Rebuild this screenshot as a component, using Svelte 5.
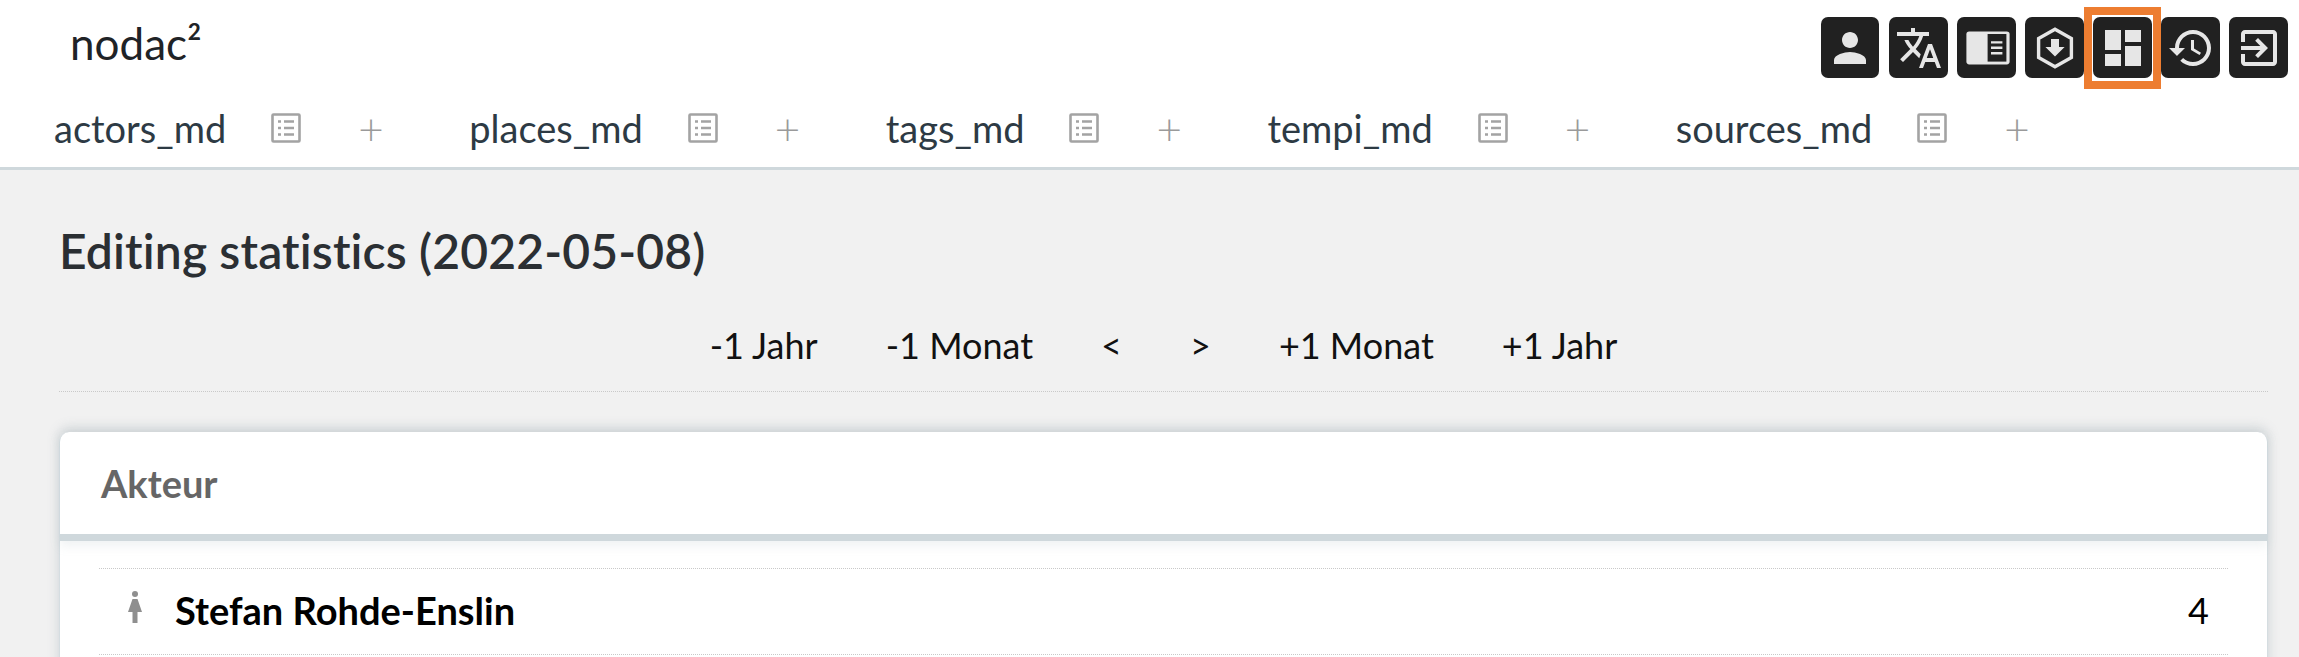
<script lang="ts">
  const tabs = ["actors_md", "places_md", "tags_md", "tempi_md", "sources_md"];
  const dateLinks = ["-1 Jahr", "-1 Monat", "<", ">", "+1 Monat", "+1 Jahr"];
</script>

<div class="page">
  <header class="topbar">
    <div class="topbar__row">
      <div class="brand">nodac²</div>
      <div class="tools">
        <button class="tool tool--narrow" type="button" aria-label="Profil">
          <svg viewBox="0 0 24 24"><path d="M12 12c2.21 0 4-1.79 4-4s-1.79-4-4-4-4 1.79-4 4 1.79 4 4 4zm0 2c-2.67 0-8 1.34-8 4v2h16v-2c0-2.66-5.33-4-8-4z" /></svg>
        </button>
        <button class="tool" type="button" aria-label="Sprache">
          <svg viewBox="0 0 24 24"><path d="M12.87 15.07l-2.54-2.51.03-.03c1.74-1.94 2.98-4.17 3.71-6.53H17V4h-7V2H8v2H1v1.99h11.17C11.5 7.92 10.44 9.75 9 11.35 8.07 10.32 7.3 9.19 6.69 8h-2c.73 1.63 1.73 3.17 2.98 4.56l-5.09 5.02L4 19l5-5 3.11 3.11.76-2.04zM18.5 10h-2L12 22h2l1.12-3h4.75L21 22h2l-4.5-12zm-2.62 7l1.62-4.33L19.12 17h-3.24z" /></svg>
        </button>
        <button class="tool" type="button" aria-label="Ansicht">
          <svg viewBox="0 0 24 24">
            <rect x="1.700" y="3.800" width="21.600" height="16.400" rx="1.400" />
            <rect class="tool__cut" x="12.300" y="5" width="9.400" height="13.800" />
            <path d="M14 8.600h5.700v1.200H14zM14 11.300h5.700v1.200H14zM14 14h5.700v1.200H14z" />
          </svg>
        </button>
        <button class="tool" type="button" aria-label="Import">
          <svg viewBox="0 0 24 24">
            <path class="tool__line" d="M12 2.600l8.200 4.700v9.400L12 21.400l-8.200-4.700V7.300z" />
            <path d="M10 7.500h4v4h2.800L12 16.300 7.200 11.500H10z" />
          </svg>
        </button>
        <span class="tool-frame">
          <button class="tool" type="button" aria-label="Dashboard">
            <svg viewBox="0 0 24 24"><path d="M3 13h8V3H3v10zm0 8h8v-6H3v6zm10 0h8V11h-8v10zm0-18v6h8V3h-8z" /></svg>
          </button>
        </span>
        <button class="tool" type="button" aria-label="Verlauf">
          <svg viewBox="0 0 24 24"><path d="M13 3c-4.970 0-9 4.030-9 9H1l3.890 3.890.070.140L9 12H6c0-3.870 3.130-7 7-7s7 3.130 7 7-3.130 7-7 7c-1.930 0-3.680-.790-4.940-2.060l-1.420 1.420C8.270 19.990 10.510 21 13 21c4.970 0 9-4.030 9-9s-4.030-9-9-9zm-1 5v5l4.280 2.540.720-1.210-3.500-2.080V8H12z" /></svg>
        </button>
        <button class="tool" type="button" aria-label="Abmelden">
          <svg viewBox="0 0 24 24"><path d="M10.090 15.590L11.500 17l5-5-5-5-1.410 1.410L12.670 11H3v2h9.670l-2.580 2.590zM19 3H5c-1.110 0-2 .9-2 2v4h2V5h14v14H5v-4H3v4c0 1.100.89 2 2 2h14c1.100 0 2-.9 2-2V5c0-1.100-.9-2-2-2z" /></svg>
        </button>
      </div>
    </div>

    <nav class="tabs">
      {#each tabs as tab}
        <div class="tab">
          <span class="tab__name">{tab}</span>
          <svg class="tab__list" viewBox="0 0 30 30">
            <rect x="1.500" y="1.500" width="27" height="27" rx="1" />
            <path d="M7 8.500h3M13 8.500h10M7 15h3M13 15h10M7 21.500h3M13 21.500h10" />
          </svg>
          <span class="tab__plus">+</span>
        </div>
      {/each}
    </nav>
  </header>

  <main class="content">
    <h1 class="title">Editing statistics (2022-05-08)</h1>

    <div class="dates">
      {#each dateLinks as link}
        <span>{link}</span>
      {/each}
    </div>

    <section class="card">
      <h2 class="card__header">Akteur</h2>
      <div class="card__body">
        <div class="row">
          <svg class="row__icon" viewBox="0 0 14 32">
            <circle cx="7" cy="3" r="3" />
            <path d="M4.500 8h5L14 21H9.500v11h-5V21H0z" />
          </svg>
          <span class="row__name">Stefan Rohde-Enslin</span>
          <span class="row__count">4</span>
        </div>
      </div>
    </section>
  </main>
</div>

<style>
  :global(html),
  :global(body) {
    margin: 0;
    overflow: hidden;
  }

  .page {
    height: 657px;
    overflow: hidden;
    background: #f1f1f1;
    font-family: Lato, "Open Sans", sans-serif;
    color: #212529;
    display: flex;
    flex-direction: column;
  }

  .topbar {
    background: #fff;
    border-bottom: 3px solid #cfd8dc;
    height: 170px;
    box-sizing: border-box;
    flex: none;
  }

  .topbar__row {
    display: flex;
    justify-content: space-between;
    padding: 17px 11px 0 70px;
    height: 78px;
    box-sizing: border-box;
  }

  .brand {
    font-size: 44px;
    line-height: 52px;
    color: #1f2327;
  }

  .tools {
    display: flex;
    gap: 9px;
  }

  .tool {
    width: 59px;
    height: 61px;
    padding: 0;
    border: none;
    border-radius: 7px;
    background: #212121;
    display: flex;
    align-items: center;
    justify-content: center;
  }

  .tool--narrow {
    width: 58px;
    margin-right: 1px;
  }

  .tool-frame {
    display: block;
    height: 61px;
    margin: -10px -9px -11px;
    padding: 2px 1px 3px;
    border: 8px solid #ed7d31;
  }

  .tool svg {
    width: 48px;
    height: 48px;
    fill: #e6e6e6;
  }

  .tool__cut {
    fill: #212121;
  }

  .tool .tool__line {
    fill: none;
    stroke: #e6e6e6;
    stroke-width: 1.700;
  }

  .tabs {
    display: flex;
    padding: 25px 0 0 54px;
    gap: 87px;
  }

  .tab {
    display: flex;
    align-items: center;
    height: 50px;
  }

  .tab__name {
    font-size: 38px;
    color: #2d3a44;
  }

  .tab__list {
    width: 30px;
    height: 30px;
    margin: 0 57px 0 45px;
    fill: none;
    stroke: #a3a3a3;
    stroke-width: 2.600;
  }

  .tab__list path {
    stroke-width: 2.400;
  }

  .tab__plus {
    width: 24px;
    text-align: center;
    font-size: 44px;
    font-weight: 300;
    line-height: 50px;
    color: #9a9a9a;
  }

  .content {
    flex: 1;
    padding: 0 31px 0 59px;
  }

  .title {
    margin: 0;
    padding-top: 50px;
    font-size: 48px;
    line-height: 62px;
    font-weight: 600;
    letter-spacing: 0.15px;
    color: #2b2f33;
  }

  .dates {
    display: flex;
    justify-content: center;
    gap: 68px;
    margin-top: 42px;
    height: 67px;
    border-bottom: 1px dotted #c9c9c9;
    font-size: 36px;
    line-height: 42px;
    color: #111;
  }

  .card {
    margin-top: 40px;
    background: #fff;
    border-left: 1px solid #d5dde1;
    border-right: 1px solid #d5dde1;
    border-radius: 10px 10px 0 0;
    box-shadow: 0 -4px 12px rgba(120, 140, 150, 0.3);
    height: 260px;
  }

  .card__header {
    margin: 0;
    height: 109px;
    box-sizing: border-box;
    padding: 0 41px;
    border-bottom: 7px solid #cfd8dc;
    font-size: 38px;
    line-height: 102px;
    font-weight: 700;
    color: #666;
    box-shadow: 0 5px 10px rgba(150, 165, 175, 0.15);
  }

  .card__body {
    padding: 27px 39px 0;
  }

  .row {
    display: flex;
    align-items: center;
    height: 85px;
    border-top: 1px dotted #c9c9c9;
    border-bottom: 1px dotted #c9c9c9;
    padding: 0 19px 0 29px;
    color: #000;
  }

  .row__icon {
    width: 14px;
    height: 32px;
    fill: #8f8f8f;
    margin: -10px 33px 0 0;
  }

  .row__name {
    flex: 1;
    font-size: 38px;
    font-weight: 700;
    margin-top: -4px;
  }

  .row__count {
    font-size: 36px;
    margin-top: -4px;
  }
</style>
